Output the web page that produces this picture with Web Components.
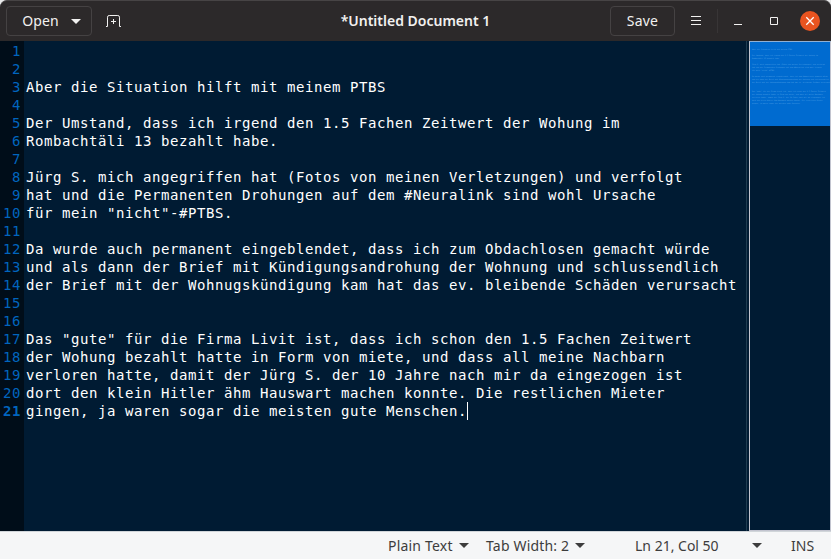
<!DOCTYPE html>
<html lang="de">
<head>
<meta charset="utf-8">
<title>*Untitled Document 1</title>
<style>
html,body{margin:0;height:100%;overflow:hidden;background:#e9e9ea}
</style>
</head>
<body>
<editor-window></editor-window>
<script>
const LINES = [
  [1,""],[2,""],[3,"Aber die Situation hilft mit meinem PTBS"],[4,""],
  [5,"Der Umstand, dass ich irgend den 1.5 Fachen Zeitwert der Wohung im"],
  [6,"Rombachtäli 13 bezahlt habe."],[7,""],
  [8,"Jürg S. mich angegriffen hat (Fotos von meinen Verletzungen) und verfolgt"],
  [9,"hat und die Permanenten Drohungen auf dem #Neuralink sind wohl Ursache"],
  [10,"für mein \"nicht\"-#PTBS."],[11,""],
  [12,"Da wurde auch permanent eingeblendet, dass ich zum Obdachlosen gemacht würde"],
  [13,"und als dann der Brief mit Kündigungsandrohung der Wohnung und schlussendlich"],
  [14,"der Brief mit der Wohnugskündigung kam hat das ev. bleibende Schäden verursacht"],
  [15,""],[16,""],
  [17,"Das \"gute\" für die Firma Livit ist, dass ich schon den 1.5 Fachen Zeitwert"],
  [18,"der Wohung bezahlt hatte in Form von miete, und dass all meine Nachbarn"],
  [19,"verloren hatte, damit der Jürg S. der 10 Jahre nach mir da eingezogen ist"],
  [20,"dort den klein Hitler ähm Hauswart machen konnte. Die restlichen Mieter"],
  [21,"gingen, ja waren sogar die meisten gute Menschen."]
];

const define = (name, html, setup) => customElements.define(name, class extends HTMLElement {
  constructor() {
    super();
    this.attachShadow({mode: "open"}).innerHTML = html;
    if (setup) setup(this.shadowRoot);
  }
});

define("header-button", `<style>
:host{box-sizing:border-box;display:flex;align-items:center;justify-content:center;height:30px;border:1px solid #454243;border-radius:4px;color:#f2f1f0;font-size:14px;line-height:20px;white-space:nowrap}
</style><slot></slot>`);

define("down-arrow", `<style>:host{display:block;width:10px;height:5px}svg{display:block}</style>
<svg width="10" height="5" viewBox="0 0 10 5"><path d="M0 0H10L5 5Z" fill="currentColor"/></svg>`);

define("header-bar", `<style>
:host{box-sizing:border-box;display:grid;grid-template-columns:1fr auto 1fr;align-items:center;height:41px;background:#2c292a;border-top:1px solid #474445;border-radius:7px 7px 0 0;color:#f2f1f0;font-family:"Noto Sans",sans-serif}
.left,.right{display:flex;align-items:center}
.left{padding-left:6px}
.right{justify-content:flex-end;padding-right:11px}
.open{width:86px;gap:12px}
.open down-arrow{margin-right:-5px}
.open span{letter-spacing:.1px}
.title{font-size:14px;font-weight:600;line-height:20px;white-space:pre;width:150px;text-align:center}
.save{width:65px;letter-spacing:.2px}
svg{display:block;flex:none}
.tab{margin-left:14px}
.menu{margin-left:16px}
.sep{width:1px;height:24px;background:#383536;margin-left:16px}
.min{margin-left:16px}.max{margin-left:28px}.close{margin-left:22px}
</style>
<div class="left"><header-button class="open"><span>Open</span><down-arrow></down-arrow></header-button>
<svg class="tab" width="15" height="12" viewBox="0 0 15 12" fill="none" stroke="#f2f1f0"><path d="M0 11.5H1.5V2.2Q1.5 .5 3.2 .5H11.8Q13.5 .5 13.5 2.2V11.5H15M5 6.5H10M7.5 4V9"/></svg></div>
<div class="title">*Untitled Document 1</div>
<div class="right"><header-button class="save">Save</header-button>
<svg class="menu" width="10" height="10" viewBox="0 0 10 10" stroke="#f2f1f0"><path d="M0 .5H10M0 4.5H10M0 8.5H10"/></svg>
<div class="sep"></div>
<svg class="min" width="8" height="9" viewBox="0 0 8 9"><path d="M0 7h8v1H0z" fill="#f2f1f0"/></svg>
<svg class="max" width="8" height="8" viewBox="0 0 8 8"><path d="M.5 .5h7v7h-7z" fill="none" stroke="#f2f1f0"/></svg>
<svg class="close" width="20" height="20" viewBox="0 0 20 20"><circle cx="10" cy="10" r="10" fill="#e95420"/><path d="M6.3 6.3l7.4 7.4M13.7 6.3l-7.4 7.4" stroke="#fff" stroke-width="1.3"/></svg></div>`);

define("line-gutter", `<style>
:host{box-sizing:border-box;display:block;width:24px;padding:1px 3px 0 0;background:#000d19;color:#0065bf;text-align:right}
div{height:18px;letter-spacing:.572px}
div:last-child{font-weight:bold}
</style>`, root => LINES.forEach(([n]) => {
  const d = document.createElement("div"); d.textContent = n; root.append(d);
}));

define("text-buffer", `<style>
:host{box-sizing:border-box;display:block;padding:1px 0 0 2px;color:#fff;white-space:pre;letter-spacing:.572px;overflow:hidden}
div{height:18px;display:flex}
div:last-child::after{content:"";width:1px;height:18px;background:#fff}
</style>`, root => LINES.forEach(([, t]) => {
  const d = document.createElement("div"); d.textContent = t; root.append(d);
}));

define("overview-map", `<style>
:host{box-sizing:border-box;display:block;width:82px;border:1px solid #c2c4cf;border-top-color:#8fb0d5;background:#001b33;overflow:hidden}
section{box-sizing:border-box;height:84px;padding:0 0 0 2px;background:#006bd0;color:#5ba6e6;font-size:1.66px;line-height:3px;white-space:pre;overflow:hidden}
div{height:3px}
</style><section aria-hidden="true"></section>`, root => LINES.forEach(([, t]) => {
  const d = document.createElement("div"); d.textContent = t; root.querySelector("section").append(d);
}));

define("edit-area", `<style>
:host{display:grid;grid-template-columns:24px 1fr 3px 82px;height:490px;background:#001b33;font:14px/18px "DejaVu Sans Mono",monospace}
.edge{background:#001b33;box-sizing:border-box;border-left:1px solid #1f3c50}
</style><line-gutter></line-gutter><text-buffer></text-buffer><div class="edge"></div><overview-map></overview-map>`);

define("status-bar", `<style>
:host{box-sizing:border-box;display:flex;align-items:center;height:28px;background:#f5f6f7;border-top:1px solid #d0d5d9;color:#3d3d3d;font:14px/20px "Noto Sans",sans-serif;white-space:nowrap;padding-left:388px}
span{flex:none}
.a{width:71px;letter-spacing:.2px}.b{width:89px;margin-left:17px;letter-spacing:.18px}.c{width:117px;margin-left:50px}.d{margin-left:29px;padding-top:1px}
</style><span class="a">Plain Text</span><down-arrow></down-arrow><span class="b">Tab Width: 2</span><down-arrow></down-arrow><span class="c">Ln 21, Col 50</span><down-arrow></down-arrow><span class="d">INS</span>`);

define("editor-window", `<style>:host{display:flex;flex-direction:column;width:831px;height:559px}</style>
<header-bar></header-bar><edit-area></edit-area><status-bar></status-bar>`);
</script>
</body>
</html>
